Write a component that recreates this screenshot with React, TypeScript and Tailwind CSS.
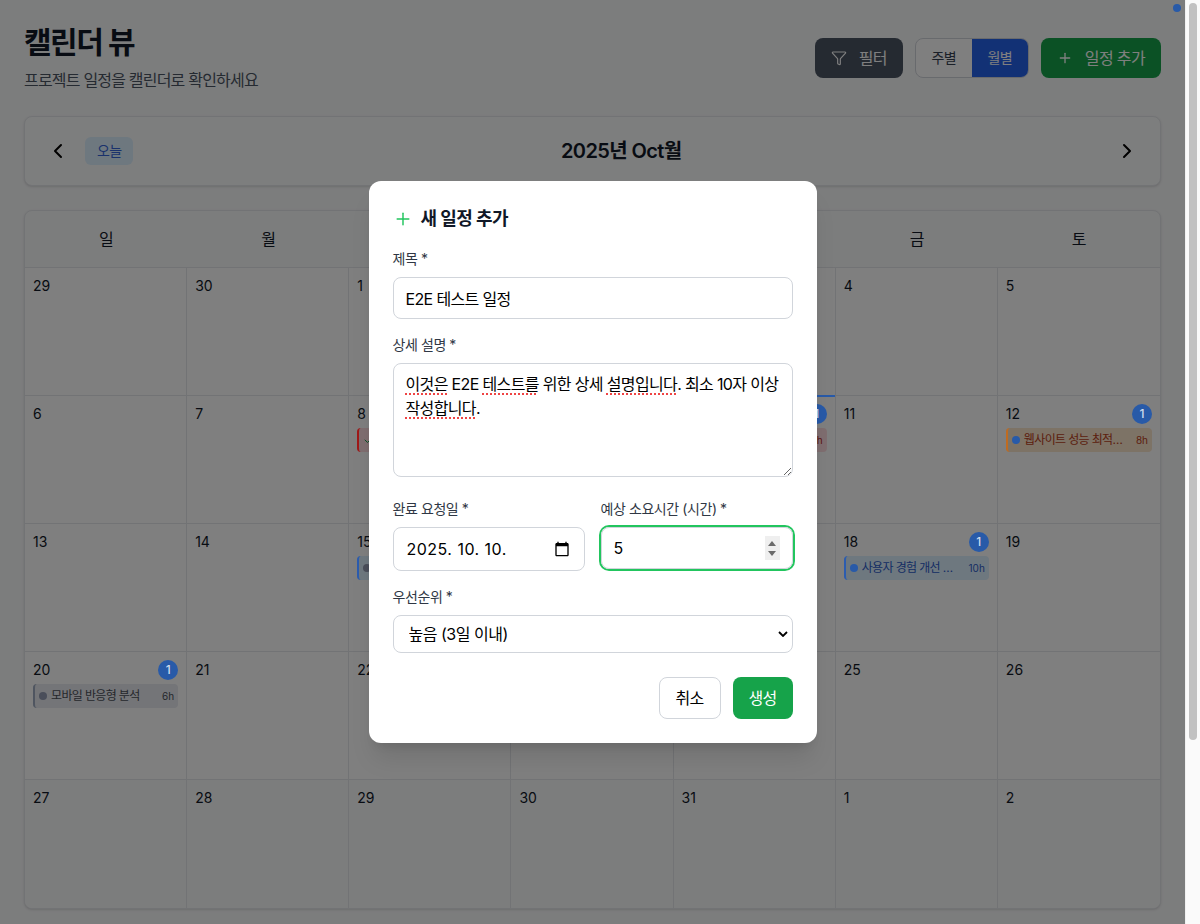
import { Check, ChevronLeft, ChevronRight, Filter, Plus } from 'lucide-react'

interface CalEvent {
  title: string
  hours: string
  box: string
  edge: string
  text: string
  dot: string
  check?: boolean
}

interface Day {
  n: number
  event?: CalEvent
  today?: boolean
}

const weekdays = ['일', '월', '화', '수', '목', '금', '토']

const red = { box: 'bg-[#ffdde0]', edge: 'border-[#a01818]', text: 'text-[#b82a26]', dot: 'bg-[#285aa8]' }
const orange = { box: 'bg-[#fbe6cc]', edge: 'border-[#c06b20]', text: 'text-[#b8401a]', dot: 'bg-[#285aa8]' }
const blue = { box: 'bg-[#dcf0ff]', edge: 'border-[#2b5cb0]', text: 'text-[#2c5bc8]', dot: 'bg-[#285aa8]' }
const gray = { box: 'bg-[#e8eaf0]', edge: 'border-[#4f5560]', text: 'text-[#4b4f58]', dot: 'bg-[#4a4e5a]' }

const days: Day[] = [
  { n: 29 }, { n: 30 }, { n: 1 }, { n: 2 }, { n: 3 }, { n: 4 }, { n: 5 },
  { n: 6 }, { n: 7 },
  { n: 8, event: { title: '디자인 시스템 구축', hours: '12h', ...red, check: true } },
  { n: 9 },
  { n: 10, today: true, event: { title: 'API 문서 작성', hours: '4h', ...red } },
  { n: 11 },
  { n: 12, event: { title: '웹사이트 성능 최적화 작업', hours: '8h', ...orange } },
  { n: 13 }, { n: 14 },
  { n: 15, event: { title: '데이터베이스 마이그레이션', hours: '6h', ...blue, dot: 'bg-[#4a4e5a]' } },
  { n: 16 }, { n: 17 },
  { n: 18, event: { title: '사용자 경험 개선 프로젝트', hours: '10h', ...blue } },
  { n: 19 },
  { n: 20, event: { title: '모바일 반응형 분석', hours: '6h', ...gray } },
  { n: 21 }, { n: 22 }, { n: 23 }, { n: 24 }, { n: 25 }, { n: 26 },
  { n: 27 }, { n: 28 }, { n: 29 }, { n: 30 }, { n: 31 }, { n: 1 }, { n: 2 },
]

const descText = '이것은 E2E 테스트를 위한 상세 설명입니다. 최소 10자 이상 작성합니다.'

function Squiggle({ children }: { children: string }) {
  return <span className="underline decoration-dotted decoration-[#ef4444] decoration-2 underline-offset-[3px]">{children}</span>
}

function Label({ children }: { children: string }) {
  return <label className="mb-2 block text-sm tracking-[-0.03em] text-[#2f3744]">{children}</label>
}

function DayCell({ day, index }: { day: Day; index: number }) {
  const lastCol = index % 7 === 6
  const lastRow = index >= 28
  return (
    <div className={`relative h-32 border-[#e5e7eb] p-2 ${lastCol ? '' : 'border-r'} ${lastRow ? 'bg-[#f9fafb]' : 'border-b bg-white'}`}>
      {day.today && <span className="absolute inset-x-0 -top-px z-50 h-0.5 bg-[#285aa8]" />}
      <div className="flex h-5 items-center justify-between">
        <span className="text-sm tracking-normal text-[#111827]">{day.n}</span>
        {day.event && (
          <span className="relative z-50 flex h-5 w-5 items-center justify-center rounded-full bg-[#285aa8] text-xs font-medium tracking-normal text-[#d0dcee]">1</span>
        )}
      </div>
      {day.event && (
        <div className={`relative mt-1 flex h-6 items-center gap-1 rounded pl-1.5 pr-1 ${day.event.box}`}>
          <span className={`absolute inset-0 z-50 rounded border-l-2 ${day.event.edge}`} />
          {day.event.check ? (
            <Check className="h-3 w-3 shrink-0 text-[#16a34a]" />
          ) : (
            <span className={`relative z-50 h-2 w-2 shrink-0 rounded-full ${day.event.dot}`} />
          )}
          <span className={`min-w-0 flex-1 truncate text-xs ${day.event.text}`}>{day.event.title}</span>
          <span className={`ml-1 shrink-0 text-[10px] tracking-normal ${day.event.text}`}>{day.event.hours}</span>
        </div>
      )}
    </div>
  )
}

export default function App() {
  return (
    <div className="flex h-[924px] overflow-hidden font-['Inter','Noto_Sans_CJK_KR',sans-serif] tracking-[-0.04em]">
      <div className="relative w-[1185px] shrink-0 overflow-hidden bg-[#f9fafb] p-6">
        <div className="mb-6 flex items-center justify-between">
          <div>
            <h1 className="text-3xl font-bold tracking-[-0.05em] text-[#111827]">캘린더 뷰</h1>
            <p className="mt-2 text-base tracking-[-0.05em] text-[#4b5563]">프로젝트 일정을 캘린더로 확인하세요</p>
          </div>
          <div className="flex items-center gap-3">
            <button className="flex h-10 items-center gap-3 rounded-lg bg-[#4b5563] px-4 text-base text-white">
              <Filter className="h-4 w-4" strokeWidth={1.75} /> 필터
            </button>
            <div className="flex h-10 overflow-hidden rounded-lg border border-[#d1d5db] bg-white">
              <button className="w-14 text-sm text-[#374151]">주별</button>
              <button className="w-14 bg-[#2563eb] text-sm text-white">월별</button>
            </div>
            <button className="flex h-10 items-center gap-3 rounded-lg bg-[#16a34a] px-4 text-base text-white">
              <Plus className="h-4 w-4" /> 일정 추가
            </button>
          </div>
        </div>

        <div className="mb-6 flex h-[70px] items-center justify-between rounded-lg border border-[#e5e7eb] bg-[#fbfcfc] px-[21px] shadow-sm">
          <div className="flex items-center gap-[15px]">
            <ChevronLeft className="h-6 w-6 text-black" />
            <button className="h-7 rounded-md bg-[#dcf0ff] px-3 text-sm text-[#3565d8]">오늘</button>
          </div>
          <h2 className="mr-[6px] text-xl font-semibold tracking-[-0.03em] text-[#111827]">2025년 Oct월</h2>
          <ChevronRight className="h-6 w-6 text-black" />
        </div>

        <div className="overflow-hidden rounded-lg border border-[#e5e7eb] bg-[#f9fafb] shadow-sm">
          <div className="grid h-[57px] grid-cols-7 border-b border-[#e5e7eb]">
            {weekdays.map((w) => (
              <div key={w} className="flex items-center justify-center text-base text-[#111827]">{w}</div>
            ))}
          </div>
          <div className="grid grid-cols-7">
            {days.map((d, i) => (
              <DayCell key={i} day={d} index={i} />
            ))}
          </div>
        </div>

        <div className="absolute inset-0 z-40 bg-black/50" />

        <div className="absolute right-1 top-1 z-50 h-2 w-2 rounded-full bg-[#285aa8]" />

        <div className="absolute inset-0 z-[60] flex items-center justify-center">
          <div className="w-[448px] rounded-xl bg-white p-6 shadow-xl">
            <div className="mb-4 flex items-center gap-2">
              <Plus className="h-5 w-5 text-[#22c55e]" strokeWidth={1.75} />
              <h3 className="text-lg font-semibold text-[#111827]">새 일정 추가</h3>
            </div>
            <div className="space-y-4">
              <div>
                <Label>제목 *</Label>
                <input
                  type="text"
                  defaultValue="E2E 테스트 일정"
                  className="h-[42px] w-full rounded-lg border border-[#d1d5db] px-3 text-base text-black outline-none"
                />
              </div>
              <div className="pb-1.5">
                <Label>상세 설명 *</Label>
                <div className="relative">
                  <textarea
                    rows={4}
                    defaultValue={descText}
                    className="block h-[114px] w-full rounded-lg border border-[#d1d5db] px-3 py-2 text-base leading-6 text-black outline-none"
                  />
                  <div aria-hidden className="pointer-events-none absolute inset-0 border border-transparent px-3 py-2 text-base leading-6 text-transparent">
                    <Squiggle>이것은</Squiggle> E2E <Squiggle>테스트를</Squiggle> 위한 상세 <Squiggle>설명입니다</Squiggle>. 최소 10자 이상 <Squiggle>작성합니다</Squiggle>.
                  </div>
                </div>
              </div>
              <div className="grid grid-cols-2 gap-4">
                <div>
                  <Label>완료 요청일 *</Label>
                  <div className="relative">
                    <input
                      type="text"
                      defaultValue="2025. 10. 10."
                      className="h-[44px] w-full rounded-lg border border-[#d1d5db] pl-[13px] pr-8 text-base tracking-[0.03em] text-black outline-none"
                    />
                    <svg viewBox="0 0 24 24" className="pointer-events-none absolute right-[15px] top-[14px] h-4 w-4" fill="black">
                      <path d="M20 3h-1V1h-2v2H7V1H5v2H4c-1.1 0-2 .9-2 2v16c0 1.1.9 2 2 2h16c1.1 0 2-.9 2-2V5c0-1.1-.9-2-2-2zm0 18H4V8h16v13z" />
                    </svg>
                  </div>
                </div>
                <div>
                  <Label>예상 소요시간 (시간) *</Label>
                  <div className="relative">
                    <input
                      type="number"
                      defaultValue={5}
                      className="h-[42px] w-full rounded-lg border border-[#d1d5db] px-3 text-base tracking-normal text-black outline-none ring-2 ring-[#22c55e] [appearance:textfield] [&::-webkit-inner-spin-button]:appearance-none"
                    />
                    <div className="pointer-events-none absolute right-[13px] top-[9px] flex h-6 w-[15px] flex-col items-center justify-center gap-[5px] bg-[#efefef]">
                      <svg viewBox="0 0 8 5" className="h-[5px] w-2" fill="#6b6b6b"><path d="M4 0l4 5H0z" /></svg>
                      <svg viewBox="0 0 8 5" className="h-[5px] w-2" fill="#6b6b6b"><path d="M0 0h8L4 5z" /></svg>
                    </div>
                  </div>
                </div>
              </div>
              <div>
                <Label>우선순위 *</Label>
                <div className="relative">
                  <select
                    defaultValue="high"
                    className="h-[38px] w-full appearance-none rounded-lg border border-[#d1d5db] bg-white pl-[15px] pr-8 text-base tracking-[-0.03em] text-black outline-none"
                  >
                    <option value="high">높음 (3일 이내)</option>
                  </select>
                  <svg viewBox="0 0 10 6" className="pointer-events-none absolute right-[5px] top-[16px] h-1.5 w-2.5" fill="none" stroke="black" strokeWidth="1.8">
                    <path d="M1 1l4 4 4-4" />
                  </svg>
                </div>
              </div>
            </div>
            <div className="mt-6 flex justify-end gap-3">
              <button className="h-[42px] w-[62px] rounded-lg border border-[#d1d5db] bg-white text-base text-black">취소</button>
              <button className="h-[42px] w-[60px] rounded-lg bg-[#16a34a] text-base text-white">생성</button>
            </div>
          </div>
        </div>
      </div>

      <div className="w-[15px] shrink-0 border-l border-[#f0f0f0] bg-[#fafafa] px-[3px] pt-[3px]">
        <div className="h-[737px] w-2 rounded-full bg-[#c1c1c1]" />
      </div>
    </div>
  )
}
